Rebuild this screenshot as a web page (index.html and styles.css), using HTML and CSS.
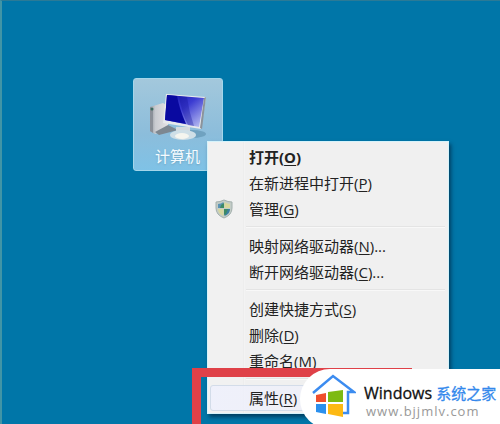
FILE: index.html
```html
<!DOCTYPE html>
<html lang="zh-CN">
<head>
<meta charset="utf-8">
<title>计算机</title>
<link rel="stylesheet" href="styles.css">
</head>
<body>
<main class="desktop">
  <button class="shortcut" type="button">
    <svg class="computer" viewBox="0 0 60 50" aria-hidden="true">
      <defs>
        <linearGradient id="screen" x1="0" y1="0" x2="1" y2="1">
          <stop offset="0" stop-color="#1010a8"/><stop offset=".45" stop-color="#3c3cd2"/><stop offset="1" stop-color="#c5ccf5"/>
        </linearGradient>
        <linearGradient id="tower" x1="0" y1="0" x2="1" y2="0">
          <stop offset="0" stop-color="#8e949c"/><stop offset=".3" stop-color="#c9cbd0"/><stop offset="1" stop-color="#e4e2e4"/>
        </linearGradient>
      </defs>
      <ellipse cx="44" cy="40" rx="14" ry="4" fill="#5e8fad" opacity=".6"/>
      <path d="M2 13 15 9 20 12V36L7 40 2 37Z" fill="url(#tower)"/>
      <path d="M2 13 5 15V39L2 37Z" fill="#8b9098"/>
      <path d="M7 38 20 31 30 36 11 41Z" fill="#7d8790"/>
      <circle cx="4" cy="15" r="1.500" fill="#3c6b60"/>
      <path d="M28 33H42V41H28Z" fill="#d4dade"/>
      <ellipse cx="35" cy="41" rx="13" ry="5" fill="#cfdfe7"/>
      <ellipse cx="34" cy="42" rx="7" ry="3" fill="#f5f5ef"/>
      <path d="M18 0 58 3 53 35 15 29Z" fill="#e7e9ec"/>
      <path d="M19 1 56 4 51 33 17 26Z" fill="url(#screen)"/>
      <path d="M19 1 29 2Q31 14 38 30L17 26Z" fill="#0909a0"/>
      <path d="M31 2 39 3Q41 18 46 32L40 31Q33 17 31 2Z" fill="#14149a" opacity=".35"/>
      <path d="M58 3 54 35 52 34 56 4Z" fill="#8b939b"/>
    </svg>
    <span class="shortcut-name">计算机</span>
  </button>

  <div class="menu" role="menu">
    <button class="item primary" type="button" role="menuitem">打开(<u>O</u>)</button>
    <button class="item" type="button" role="menuitem">在新进程中打开(<u>P</u>)</button>
    <button class="item" type="button" role="menuitem">
      <svg class="shield" viewBox="0 0 18 20" aria-hidden="true">
        <path d="M9 1Q13 3 17 3V9Q17 16 9 19Q1 16 1 9V3Q5 3 9 1Z" fill="#c3ccc7" stroke="#a3b0ad"/>
        <path d="M8.500 3V9H3V5Q6 5 8.500 3Z" fill="#5a93b4"/>
        <path d="M9.500 3Q12 5 15 5V9H9.500Z" fill="#d8d79a"/>
        <path d="M3 10H8.500V17Q3 15 3 10Z" fill="#d6d7a0"/>
        <path d="M9.500 10H15Q15 15 9.500 17Z" fill="#397fa2"/>
        <path d="M6 6 9 4V9H5ZM9 10H13L11 15 9 16Z" fill="#3d8a65"/>
      </svg>管理(<u>G</u>)</button>
    <hr class="rule">
    <button class="item" type="button" role="menuitem">映射网络驱动器(<u>N</u>)...</button>
    <button class="item" type="button" role="menuitem">断开网络驱动器(<u>C</u>)...</button>
    <hr class="rule">
    <button class="item" type="button" role="menuitem">创建快捷方式(<u>S</u>)</button>
    <button class="item" type="button" role="menuitem">删除(<u>D</u>)</button>
    <button class="item" type="button" role="menuitem">重命名(<u>M</u>)</button>
    <hr class="rule">
    <button class="item hovered" type="button" role="menuitem">属性(<u>R</u>)</button>
  </div>

  <div class="marker"></div>

  <div class="badge">
    <svg class="logo" viewBox="0 0 44 44" aria-hidden="true">
      <path d="M1 20 21 3 42 19H36V40H31" fill="none" stroke="#3c8cf0" stroke-width="2.500"/>
      <path d="M4 22 14 20V29H4Z" fill="#f04e2c"/>
      <path d="M16 19 31 17V29H16Z" fill="#7dba12"/>
      <path d="M4 31H14V41L4 39Z" fill="#2b90ee"/>
      <path d="M16 31H31V44L16 41Z" fill="#fdb913"/>
    </svg>
    <div class="brand">
      <div class="brand-name">Windows <span class="brand-accent">系统之家</span></div>
      <div class="brand-url">www.bjjmlv.com</div>
    </div>
  </div>
</main>
</body>
</html>
```
FILE: styles.css
```css
* {
  box-sizing: border-box;
}

body {
  margin: 0;
  font-family: "Open Sans", "Noto Sans CJK SC", sans-serif;
}

button {
  font: inherit;
  border: 0;
  padding: 0;
}

.desktop {
  position: relative;
  min-height: 100vh;
  overflow: hidden;
  background: #0076a8;
  border-left: 2px solid #4195a6;
  border-top: 1px solid #2b7a96;
}

.shortcut {
  position: absolute;
  left: 131px;
  top: 77px;
  width: 90px;
  height: 93px;
  padding: 15px 0 0 14px;
  display: flex;
  flex-direction: column;
  align-items: flex-start;
  border: 1px solid #a4d6ea;
  border-radius: 3px;
  background: linear-gradient(#a3c8dc, #8cbddb 60%, #7fc2e6);
}

.computer {
  width: 60px;
  height: 50px;
  flex: none;
}

.shortcut-name {
  padding-left: 7px;
  font-size: 15px;
  line-height: 24px;
  color: #f4fbff;
  text-shadow: 0 1px 2px #6fa5c2;
}

.menu {
  position: absolute;
  left: 205px;
  top: 140px;
  width: 242px;
  padding: 2px;
  border: 1px solid #d5f3fb;
  background: linear-gradient(90deg, #f1f1f1 35px, #e4e4e4 35px, #f6f6f6 36px, #f0f0f0 37px);
  box-shadow: 2px 3px 4px rgba(0, 25, 50, .6);
}

.item {
  position: relative;
  display: block;
  width: 100%;
  height: 26px;
  padding-left: 39px;
  text-align: left;
  font-size: 15px;
  line-height: 26px;
  color: #222;
  background: none;
  white-space: nowrap;
}

.item u {
  text-underline-offset: 2px;
}

.primary {
  font-weight: 700;
}

.hovered {
  border: 1px solid #d3dce9;
  border-radius: 3px;
  padding-left: 38px;
  line-height: 24px;
  background: linear-gradient(90deg, rgba(238, 240, 255, .7), rgba(240, 240, 244, .6));
}

.shield {
  position: absolute;
  left: 5px;
  top: 3px;
  width: 18px;
  height: 20px;
}

.rule {
  height: 2px;
  margin: 4px 1px 5px 36px;
  border: 0;
  border-top: 1px solid #e4e4e4;
  background: #f8f8f8;
}

.marker {
  position: absolute;
  left: 190px;
  top: 367px;
  width: 220px;
  height: 80px;
  border: 9px solid #df4148;
}

.badge {
  position: absolute;
  left: 298px;
  right: 0;
  top: 368px;
  height: 60px;
  padding: 4px 0 0 12px;
  display: flex;
  gap: 8px;
  background: #fff;
  border-radius: 30px 0 0 30px;
}

.logo {
  width: 44px;
  height: 44px;
  flex: none;
}

.brand {
  padding-top: 10px;
  white-space: nowrap;
}

.brand-name {
  font-size: 16px;
  line-height: 20px;
  color: #111;
  -webkit-text-stroke: 0.3px;
}

.brand-accent {
  font-size: 15px;
  color: #3388ec;
}

.brand-url {
  padding-left: 2px;
  font-size: 13px;
  line-height: 16px;
  letter-spacing: 1px;
  color: #999;
}
```
